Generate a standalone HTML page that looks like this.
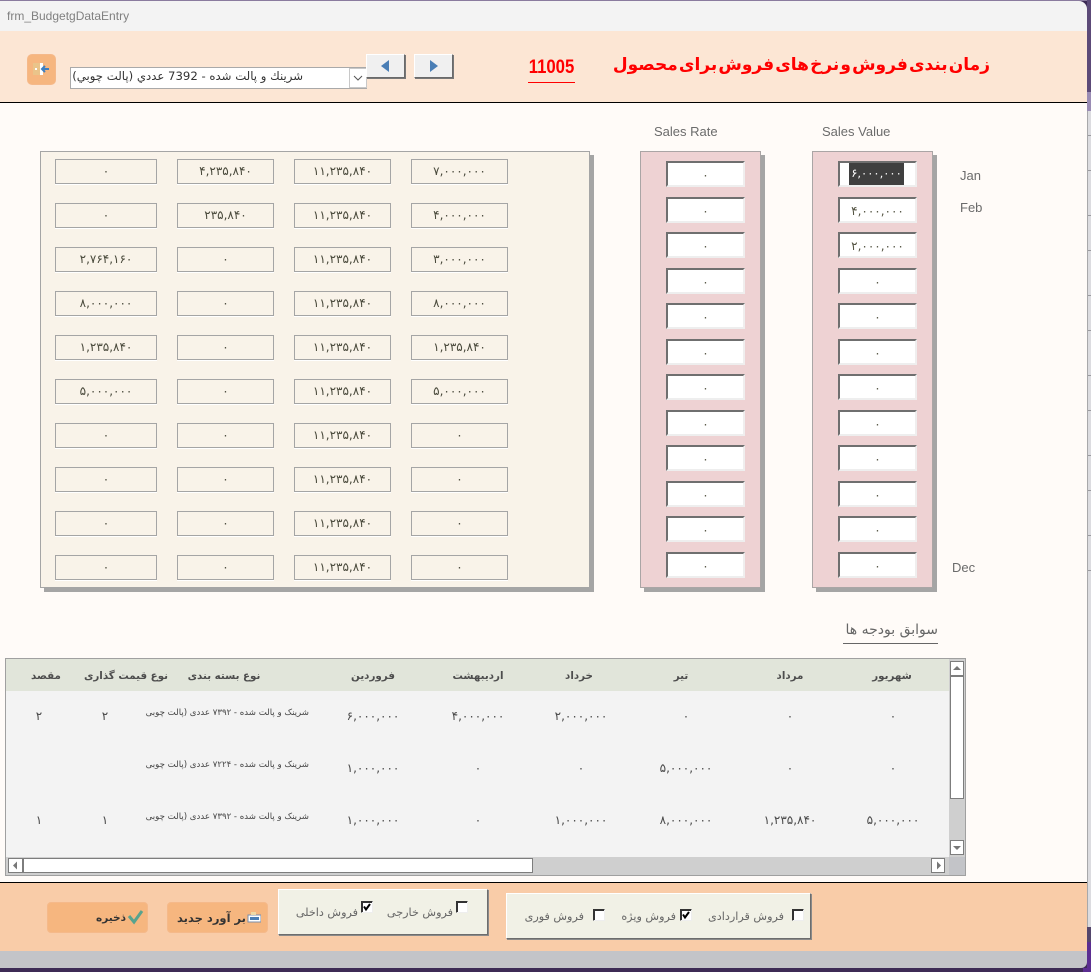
<!DOCTYPE html>
<html><head><meta charset="utf-8"><title>frm_BudgetgDataEntry</title>
<style>
html,body{margin:0;padding:0;width:1091px;height:972px;overflow:hidden;background:#3d2b55}
*{box-sizing:border-box}
#r{position:relative;width:1091px;height:972px;overflow:hidden;font-family:"Liberation Sans","DejaVu Sans",sans-serif}
#r div,#r span.a{position:absolute}
.f,.p,.w{font-family:"DejaVu Sans",sans-serif;font-size:12px;text-align:center;color:#4a4a3c;direction:ltr;letter-spacing:1.4px}
.f{background:#f9f3e9;border:1px solid #a5a5a5;height:25px;line-height:23px;box-shadow:0 1px 0 #fff}
.w{background:#fff;width:79px;height:26px;line-height:24px;border:2px solid;border-color:#6f6f6f #f0eeee #eeeeee #6f6f6f;color:#554}
.t{color:#6b6b6b;font-size:13px;white-space:nowrap}
.h,.c,.s{font-family:"DejaVu Sans",sans-serif;white-space:nowrap;text-align:center}
.h{top:669px;font-size:10.3px;color:#4d4d4d;height:14px;line-height:14px;direction:rtl;font-weight:bold}
.c{font-size:12px;color:#4a4a4a;letter-spacing:1.2px;direction:ltr;height:14px;line-height:14px}
.s{font-size:8.6px;color:#444;direction:rtl;left:146px;width:163px;overflow:hidden;height:13px;line-height:13px;text-align:right}
.k{width:12px;height:12px;background:#fff;border:1px solid;border-color:#333 #eee #eee #333;box-shadow:inset 1px 1px 0 #333}
.l{font-family:"DejaVu Sans",sans-serif;font-size:11.2px;color:#666;direction:rtl;white-space:nowrap;height:16px;line-height:16px}
.sb{background:#fff;border:1px solid #7d7d7d}
.g{background:#f1f1e6;border:1px solid;border-color:#fff #6d6d6d #6d6d6d #fff;box-shadow:1px 1px 0 #8a8a8a}
.b{background:#f6b67f;border-radius:4px;border:1px solid #f5b98a}
.nb{background:#f0f0f0;border:1px solid;border-color:#fff #6a6a6a #6a6a6a #fff;box-shadow:1px 1px 0 #777;width:39px;height:24px}
.hr{left:1088px;width:3px;height:1px;background:#9a9a9e}
</style></head>
<body><div id="r">
<!-- outer -->
<div style="left:0;top:0;width:1091px;height:1px;background:#8a7b9e"></div>
<div style="left:1087px;top:0;width:4px;height:92px;background:#5c4a78"></div>
<div style="left:1087px;top:92px;width:4px;height:19px;background:#9a8cb4"></div>
<div style="left:1087px;top:111px;width:4px;height:816px;background:#dcdce0"></div>
<div style="left:1087px;top:927px;width:4px;height:15px;background:#54466c"></div>
<div style="left:1087px;top:942px;width:4px;height:30px;background:#5b2d91"></div>
<div style="left:1087px;top:111px;width:1px;height:816px;background:#a8a8aa"></div>
<div class="hr" style="top:135px"></div><div class="hr" style="top:170px"></div><div class="hr" style="top:215px"></div><div class="hr" style="top:250px"></div><div class="hr" style="top:295px"></div><div class="hr" style="top:330px"></div><div class="hr" style="top:375px"></div><div class="hr" style="top:410px"></div><div class="hr" style="top:455px"></div><div class="hr" style="top:490px"></div><div class="hr" style="top:535px"></div><div class="hr" style="top:570px"></div>
<div style="left:0;top:968px;width:1083px;height:4px;background:#3d2b55"></div>
<div style="left:1083px;top:968px;width:8px;height:4px;background:#5b2d91"></div>
<!-- title -->
<div style="left:0;top:1px;width:1087px;height:30px;background:#f3f3f3;border-top-right-radius:8px"></div>
<div style="left:7px;top:9px;font-size:12px;color:#808080;white-space:nowrap;line-height:14px">frm_BudgetgDataEntry</div>
<!-- header -->
<div style="left:0;top:31px;width:1087px;height:71px;background:#fce6d4"></div>
<div style="left:0;top:102px;width:1087px;height:1px;background:#000"></div>
<div class="b" style="left:27px;top:54px;width:29px;height:31px;border-radius:5px"></div>
<svg style="position:absolute;left:27px;top:54px" width="29" height="31" viewBox="0 0 29 31"><rect x="6" y="9" width="9" height="12" fill="#eac48a"/><rect x="13" y="9" width="3" height="12" fill="#fff"/><rect x="8" y="14" width="2" height="2" fill="#fff"/><path d="M15 15h7M18 12l-3 3 3 3" stroke="#3f7fc0" stroke-width="2" fill="none"/></svg>
<div style="left:70px;top:67px;width:297px;height:22px;background:#fff;border:1px solid #a9a9a9"></div>
<div style="left:72px;top:67px;width:231px;height:20px;font-family:'DejaVu Sans',sans-serif;font-size:11.7px;line-height:19px;color:#333;direction:rtl;text-align:right;white-space:nowrap;overflow:hidden">شرینك و پالت شده - 7392 عددي (پالت چوبي)</div>
<div style="left:349px;top:68px;width:18px;height:20px;background:#fff;border:1px solid #c8c8c8"></div>
<svg style="position:absolute;left:349px;top:68px" width="18" height="20"><path d="M5 8l4 4 4-4" fill="none" stroke="#555" stroke-width="1"/></svg>
<div class="nb" style="left:366px;top:54px"></div>
<svg style="position:absolute;left:366px;top:54px" width="39" height="24"><path d="M15 12l8-6v12z" fill="#4a7eb5"/></svg>
<div class="nb" style="left:414px;top:54px"></div>
<svg style="position:absolute;left:414px;top:54px" width="39" height="24"><path d="M24 12l-8-6v12z" fill="#4a7eb5"/></svg>
<div style="left:528px;top:82px;width:47px;height:1px;background:#f00"></div>
<div style="left:518px;top:56px;width:67px;height:24px;color:#f00;font-weight:bold;font-size:19px;line-height:24px;text-align:center;transform:scaleX(.88)">11005</div>
<div id="tt" style="left:590px;top:53px;width:400px;height:24px;font-family:'DejaVu Sans',sans-serif;font-weight:bold;font-size:17px;word-spacing:-4.8px;line-height:24px;color:#f00;direction:rtl;text-align:right;white-space:nowrap">زمان بندی فروش و نرخ های فروش برای محصول</div>
<!-- body -->
<div style="left:0;top:103px;width:1087px;height:779px;background:#fffbf8"></div>
<div style="left:0;top:882px;width:1087px;height:1px;background:#000"></div>
<div class="t" style="left:654px;top:124px">Sales Rate</div>
<div class="t" style="left:822px;top:124px">Sales Value</div>
<div class="t" style="left:960px;top:168px">Jan</div>
<div class="t" style="left:960px;top:200px">Feb</div>
<div class="t" style="left:952px;top:560px">Dec</div>
<!-- left panel -->
<div style="left:40px;top:151px;width:550px;height:437px;background:#f9f3e9;border:1px solid #a5a5a5;box-shadow:4px 4px 0 #a5a5a5"></div>
<div class="f" style="left:55px;top:159px;width:102px">۰</div><div class="f" style="left:177px;top:159px;width:97px">۴,۲۳۵,۸۴۰</div><div class="f" style="left:294px;top:159px;width:97px">۱۱,۲۳۵,۸۴۰</div><div class="f" style="left:411px;top:159px;width:97px">۷,۰۰۰,۰۰۰</div>
<div class="f" style="left:55px;top:203px;width:102px">۰</div><div class="f" style="left:177px;top:203px;width:97px">۲۳۵,۸۴۰</div><div class="f" style="left:294px;top:203px;width:97px">۱۱,۲۳۵,۸۴۰</div><div class="f" style="left:411px;top:203px;width:97px">۴,۰۰۰,۰۰۰</div>
<div class="f" style="left:55px;top:247px;width:102px">۲,۷۶۴,۱۶۰</div><div class="f" style="left:177px;top:247px;width:97px">۰</div><div class="f" style="left:294px;top:247px;width:97px">۱۱,۲۳۵,۸۴۰</div><div class="f" style="left:411px;top:247px;width:97px">۳,۰۰۰,۰۰۰</div>
<div class="f" style="left:55px;top:291px;width:102px">۸,۰۰۰,۰۰۰</div><div class="f" style="left:177px;top:291px;width:97px">۰</div><div class="f" style="left:294px;top:291px;width:97px">۱۱,۲۳۵,۸۴۰</div><div class="f" style="left:411px;top:291px;width:97px">۸,۰۰۰,۰۰۰</div>
<div class="f" style="left:55px;top:335px;width:102px">۱,۲۳۵,۸۴۰</div><div class="f" style="left:177px;top:335px;width:97px">۰</div><div class="f" style="left:294px;top:335px;width:97px">۱۱,۲۳۵,۸۴۰</div><div class="f" style="left:411px;top:335px;width:97px">۱,۲۳۵,۸۴۰</div>
<div class="f" style="left:55px;top:379px;width:102px">۵,۰۰۰,۰۰۰</div><div class="f" style="left:177px;top:379px;width:97px">۰</div><div class="f" style="left:294px;top:379px;width:97px">۱۱,۲۳۵,۸۴۰</div><div class="f" style="left:411px;top:379px;width:97px">۵,۰۰۰,۰۰۰</div>
<div class="f" style="left:55px;top:423px;width:102px">۰</div><div class="f" style="left:177px;top:423px;width:97px">۰</div><div class="f" style="left:294px;top:423px;width:97px">۱۱,۲۳۵,۸۴۰</div><div class="f" style="left:411px;top:423px;width:97px">۰</div>
<div class="f" style="left:55px;top:467px;width:102px">۰</div><div class="f" style="left:177px;top:467px;width:97px">۰</div><div class="f" style="left:294px;top:467px;width:97px">۱۱,۲۳۵,۸۴۰</div><div class="f" style="left:411px;top:467px;width:97px">۰</div>
<div class="f" style="left:55px;top:511px;width:102px">۰</div><div class="f" style="left:177px;top:511px;width:97px">۰</div><div class="f" style="left:294px;top:511px;width:97px">۱۱,۲۳۵,۸۴۰</div><div class="f" style="left:411px;top:511px;width:97px">۰</div>
<div class="f" style="left:55px;top:555px;width:102px">۰</div><div class="f" style="left:177px;top:555px;width:97px">۰</div><div class="f" style="left:294px;top:555px;width:97px">۱۱,۲۳۵,۸۴۰</div><div class="f" style="left:411px;top:555px;width:97px">۰</div>
<!-- pink panels -->
<div style="left:640px;top:151px;width:121px;height:437px;background:#eed2d3;border:1px solid #aaa5a5;box-shadow:4px 4px 0 #a5a5a5"></div>
<div style="left:812px;top:151px;width:121px;height:437px;background:#eed2d3;border:1px solid #aaa5a5;box-shadow:4px 4px 0 #a5a5a5"></div>
<div class="w" style="left:666px;top:161px">۰</div><div class="w" style="left:666px;top:197px">۰</div><div class="w" style="left:666px;top:232px">۰</div><div class="w" style="left:666px;top:268px">۰</div><div class="w" style="left:666px;top:303px">۰</div><div class="w" style="left:666px;top:339px">۰</div><div class="w" style="left:666px;top:374px">۰</div><div class="w" style="left:666px;top:410px">۰</div><div class="w" style="left:666px;top:445px">۰</div><div class="w" style="left:666px;top:481px">۰</div><div class="w" style="left:666px;top:516px">۰</div><div class="w" style="left:666px;top:552px">۰</div>
<div class="w" style="left:838px;top:161px"></div>
<div style="left:849px;top:163px;width:55px;height:22px;background:#3f3f3f;color:#fff;font-family:'DejaVu Sans',sans-serif;font-size:11.5px;line-height:21px;text-align:center;letter-spacing:1.3px;direction:ltr;overflow:hidden;white-space:nowrap">۶,۰۰۰,۰۰۰</div>
<div class="w" style="left:838px;top:197px">۴,۰۰۰,۰۰۰</div><div class="w" style="left:838px;top:232px">۲,۰۰۰,۰۰۰</div><div class="w" style="left:838px;top:268px">۰</div><div class="w" style="left:838px;top:303px">۰</div><div class="w" style="left:838px;top:339px">۰</div><div class="w" style="left:838px;top:374px">۰</div><div class="w" style="left:838px;top:410px">۰</div><div class="w" style="left:838px;top:445px">۰</div><div class="w" style="left:838px;top:481px">۰</div><div class="w" style="left:838px;top:516px">۰</div><div class="w" style="left:838px;top:552px">۰</div>
<!-- history heading -->
<div style="left:843px;top:620px;width:95px;height:24px;border-bottom:1px solid #666;font-family:'DejaVu Sans',sans-serif;font-size:14px;line-height:20px;color:#666;direction:rtl;text-align:right;white-space:nowrap">سوابق بودجه ها</div>
<!-- grid -->
<div style="left:5px;top:658px;width:961px;height:218px;background:#f3f3f3;border:1px solid #a0a0a0"></div>
<div style="left:6px;top:659px;width:943px;height:32px;background:#e1e5da"></div>
<div class="h" style="left:26px;width:40px">مقصد</div>
<div class="h" style="left:76px;width:100px">نوع قیمت گذاری</div>
<div class="h" style="left:180px;width:88px">نوع بسته بندی</div>
<div class="h" style="left:343px;width:60px">فروردین</div>
<div class="h" style="left:448px;width:60px">اردیبهشت</div>
<div class="h" style="left:559px;width:40px">خرداد</div>
<div class="h" style="left:666px;width:30px">تیر</div>
<div class="h" style="left:772px;width:36px">مرداد</div>
<div class="h" style="left:867px;width:50px">شهریور</div>

<div class="c" style="left:29px;top:709px;width:20px">۲</div><div class="c" style="left:95px;top:709px;width:20px">۲</div>
<div class="s" style="top:707px">شرینک و پالت شده - ۷۳۹۲ عددی (پالت چوبی)</div>
<div class="c" style="left:340px;top:709px;width:66px">۶,۰۰۰,۰۰۰</div><div class="c" style="left:445px;top:709px;width:66px">۴,۰۰۰,۰۰۰</div><div class="c" style="left:548px;top:709px;width:66px">۲,۰۰۰,۰۰۰</div><div class="c" style="left:653px;top:709px;width:66px">۰</div><div class="c" style="left:757px;top:709px;width:66px">۰</div><div class="c" style="left:860px;top:709px;width:66px">۰</div>

<div class="s" style="top:759px">شرینک و پالت شده - ۷۲۲۴ عددی (پالت چوبی)</div>
<div class="c" style="left:340px;top:761px;width:66px">۱,۰۰۰,۰۰۰</div><div class="c" style="left:445px;top:761px;width:66px">۰</div><div class="c" style="left:548px;top:761px;width:66px">۰</div><div class="c" style="left:653px;top:761px;width:66px">۵,۰۰۰,۰۰۰</div><div class="c" style="left:757px;top:761px;width:66px">۰</div><div class="c" style="left:860px;top:761px;width:66px">۰</div>

<div class="c" style="left:29px;top:813px;width:20px">۱</div><div class="c" style="left:95px;top:813px;width:20px">۱</div>
<div class="s" style="top:811px">شرینک و پالت شده - ۷۳۹۲ عددی (پالت چوبی)</div>
<div class="c" style="left:340px;top:813px;width:66px">۱,۰۰۰,۰۰۰</div><div class="c" style="left:445px;top:813px;width:66px">۰</div><div class="c" style="left:548px;top:813px;width:66px">۱,۰۰۰,۰۰۰</div><div class="c" style="left:653px;top:813px;width:66px">۸,۰۰۰,۰۰۰</div><div class="c" style="left:757px;top:813px;width:66px">۱,۲۳۵,۸۴۰</div><div class="c" style="left:860px;top:813px;width:66px">۵,۰۰۰,۰۰۰</div>
<!-- scrollbars -->
<div style="left:949px;top:659px;width:16px;height:198px;background:#cfcfcf"></div>
<div style="left:6px;top:857px;width:959px;height:18px;background:#cfcfcf"></div>
<div style="left:949px;top:857px;width:16px;height:18px;background:#c3c4c8"></div>
<div class="sb" style="left:950px;top:661px;width:14px;height:15px"></div>
<svg style="position:absolute;left:950px;top:661px" width="14" height="15"><path d="M7 5l4 4H3z" fill="#777"/></svg>
<div class="sb" style="left:950px;top:676px;width:14px;height:123px"></div>
<div class="sb" style="left:950px;top:840px;width:14px;height:15px"></div>
<svg style="position:absolute;left:950px;top:840px" width="14" height="15"><path d="M7 10l4-4H3z" fill="#777"/></svg>
<div class="sb" style="left:8px;top:858px;width:15px;height:15px"></div>
<svg style="position:absolute;left:8px;top:858px" width="15" height="15"><path d="M5 7.5l4-4v8z" fill="#777"/></svg>
<div class="sb" style="left:23px;top:858px;width:510px;height:15px"></div>
<div class="sb" style="left:931px;top:858px;width:14px;height:15px"></div>
<svg style="position:absolute;left:931px;top:858px" width="14" height="15"><path d="M10 7.5l-4-4v8z" fill="#777"/></svg>
<!-- footer -->
<div style="left:0;top:883px;width:1087px;height:68px;background:#f9cca8"></div>
<div style="left:0;top:951px;width:1087px;height:17px;background:#c3c4c8;border-bottom-right-radius:6px"></div>
<div class="b" style="left:47px;top:902px;width:101px;height:31px"></div>
<div style="left:90px;top:910px;width:36px;height:16px;font-family:'DejaVu Sans',sans-serif;font-weight:bold;font-size:10.5px;line-height:16px;color:#333;direction:rtl;text-align:right;white-space:nowrap">ذخیره</div>
<svg style="position:absolute;left:126px;top:908px" width="20" height="18"><path d="M3 8l5 6 8-11" fill="none" stroke="#58a38e" stroke-width="3"/></svg>
<div class="b" style="left:167px;top:902px;width:101px;height:31px"></div>
<div style="left:170px;top:910px;width:76px;height:16px;font-family:'DejaVu Sans',sans-serif;font-weight:bold;font-size:11.5px;line-height:16px;color:#333;direction:rtl;text-align:right;white-space:nowrap">بر آورد جدید</div>
<svg style="position:absolute;left:247px;top:910px" width="14" height="14"><rect x="1" y="5" width="13" height="7" fill="#fff" stroke="#7b8ea8"/><rect x="3" y="7" width="9" height="3" fill="#4a7eb5"/><rect x="4" y="2" width="5" height="3" fill="#eed9a6"/></svg>
<div class="g" style="left:278px;top:889px;width:210px;height:46px"></div>
<div class="l" style="left:290px;top:905px;width:68px;text-align:right">فروش داخلی</div>
<div class="k" style="left:361px;top:901px"></div>
<svg style="position:absolute;left:361px;top:901px" width="12" height="12"><path d="M3 5.5l2 3 4-5.5" fill="none" stroke="#000" stroke-width="2"/></svg>
<div class="l" style="left:385px;top:905px;width:68px;text-align:right">فروش خارجی</div>
<div class="k" style="left:456px;top:901px"></div>
<div class="g" style="left:506px;top:893px;width:305px;height:46px"></div>
<div class="l" style="left:526px;top:909px;width:58px;text-align:right">فروش فوری</div>
<div class="k" style="left:593px;top:909px"></div>
<div class="l" style="left:620px;top:909px;width:56px;text-align:right">فروش ویژه</div>
<div class="k" style="left:680px;top:909px"></div>
<svg style="position:absolute;left:680px;top:909px" width="12" height="12"><path d="M3 5.5l2 3 4-5.5" fill="none" stroke="#000" stroke-width="2"/></svg>
<div class="l" style="left:700px;top:909px;width:84px;text-align:right">فروش قراردادی</div>
<div class="k" style="left:792px;top:909px"></div>
</div></body></html>
